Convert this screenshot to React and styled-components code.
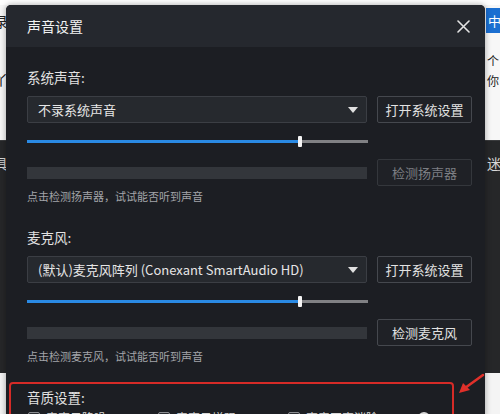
import React from "react"
import styled, { createGlobalStyle } from "styled-components"

const GlobalStyle = createGlobalStyle`
	html, body {
		margin: 0;
		padding: 0;
		width: 500px;
		height: 414px;
		overflow: hidden;
		font-family: "Noto Sans CJK SC", "Noto Sans", sans-serif;
	}
`

const sources = [
	{
		id: "sys",
		label: "系统声音:",
		device: "不录系统声音",
		test: "检测扬声器",
		disabled: true,
		hint: "点击检测扬声器，试试能否听到声音",
	},
	{
		id: "mic",
		label: "麦克风:",
		device: "(默认)麦克风阵列 (Conexant SmartAudio HD)",
		test: "检测麦克风",
		disabled: false,
		hint: "点击检测麦克风，试试能否听到声音",
	},
]

const qualityOptions = ["麦克风降噪", "麦克风增强", "声音回声消除"]

function App() {
	return (
		<>
			<GlobalStyle />
			<Page>
				<BackApp>
					<TopBand>
						<EdgeText side="left" top={8}>录</EdgeText>
						<EdgeText side="left" top={66}>丫</EdgeText>
						<BlueTab>中</BlueTab>
						<EdgeText side="right" top={48} small>个</EdgeText>
						<EdgeText side="right" top={68} small>你</EdgeText>
					</TopBand>
					<DarkBand>
						<EdgeText side="left" top={14} light>具</EdgeText>
						<EdgeText side="right" top={14} light>迷</EdgeText>
					</DarkBand>
					<BottomBand />
				</BackApp>

				<Dialog>
					<Header>
						<Title>声音设置</Title>
						<CloseButton aria-label="关闭">
							<svg width="13" height="13" viewBox="0 0 13 13">
								<path d="M1 1 L12 12 M12 1 L1 12" stroke="#e4e4e4" strokeWidth="1.6" strokeLinecap="round" />
							</svg>
						</CloseButton>
					</Header>
					<Body>
						{sources.map((s) => (
							<Section key={s.id}>
								<Label>{s.label}</Label>
								<Row>
									<Select>
										<span>{s.device}</span>
										<Caret />
									</Select>
									<Button>打开系统设置</Button>
								</Row>
								<SliderWrap>
									<Track>
										<Fill style={{ width: "80%" }} />
										<Thumb style={{ left: "80%" }} />
									</Track>
								</SliderWrap>
								<Row>
									<Meter />
									<Button disabled={s.disabled}>{s.test}</Button>
								</Row>
								<Hint>{s.hint}</Hint>
							</Section>
						))}
						<QualityBox>
							<Label>音质设置:</Label>
							<Options>
								{qualityOptions.map((o) => (
									<Option key={o}>
										<Check />
										<span>{o}</span>
									</Option>
								))}
								<Info>?</Info>
							</Options>
						</QualityBox>
					</Body>
					<Arrow width="28" height="22" viewBox="0 0 28 22">
						<path d="M26 2 L8 15" stroke="#e0302a" strokeWidth="2.6" strokeLinecap="round" />
						<path d="M2 20 L6 10 L13 17 Z" fill="#e0302a" />
					</Arrow>
				</Dialog>
			</Page>
		</>
	)
}

const Page = styled.div`
	position: relative;
	width: 500px;
	height: 414px;
	overflow: hidden;
	background: #ffffff;
`

const BackApp = styled.div`
	display: flex;
	flex-direction: column;
	height: 100%;
`

const TopBand = styled.div`
	position: relative;
	height: 140px;
	background: #f7f7f7;
	border-top: 5px solid #ffffff;
	box-sizing: border-box;
`

const DarkBand = styled.div`
	position: relative;
	height: 232px;
	background: #262729;
	border-top: 1px solid #3a3b3d;
`

const BottomBand = styled.div`
	flex: 1;
	background: #f4f4f4;
`

const EdgeText = styled.span`
	position: absolute;
	top: ${(p) => p.top}px;
	${(p) => (p.side === "left" ? "left: -6px;" : "left: 487px;")}
	font-size: ${(p) => (p.small ? 12 : 14)}px;
	line-height: 16px;
	color: ${(p) => (p.light ? "#d8d8d8" : "#222")};
`

const BlueTab = styled.div`
	position: absolute;
	top: 3px;
	left: 486px;
	width: 30px;
	height: 25px;
	background: #1b6fd1;
	color: #fff;
	font-size: 13px;
	line-height: 25px;
	padding-left: 2px;
`

const Dialog = styled.div`
	position: absolute;
	left: 6px;
	top: 5px;
	width: 479px;
	height: 440px;
	border-radius: 5px;
	overflow: hidden;
	background: #1c1e23;
	box-shadow: 0 0 6px rgba(0, 0, 0, 0.35);
`

const Header = styled.div`
	height: 42px;
	background: #25282e;
	display: flex;
	align-items: center;
	justify-content: space-between;
	padding: 0 14px 0 21px;
`

const Title = styled.h1`
	margin: 0;
	font-size: 14px;
	font-weight: 400;
	color: #f2f2f2;
`

const CloseButton = styled.button`
	background: none;
	border: none;
	padding: 0;
	width: 16px;
	height: 16px;
	display: flex;
	align-items: center;
	justify-content: center;
`

const Body = styled.div`
	padding: 20px 13px 0 21px;
	display: flex;
	flex-direction: column;
`

const Section = styled.div`
	display: flex;
	flex-direction: column;
	margin-bottom: 23px;
`

const Label = styled.div`
	height: 20px;
	line-height: 20px;
	font-size: 13.5px;
	color: #e2e2e2;
	margin-bottom: 9px;
`

const Row = styled.div`
	display: flex;
	align-items: center;
	gap: 10px;
	height: 27px;
`

const Select = styled.div`
	width: 341px;
	height: 27px;
	box-sizing: border-box;
	background: #26292e;
	border: 1px solid #3b3e44;
	border-radius: 2px;
	display: flex;
	align-items: center;
	justify-content: space-between;
	padding: 0 8px 0 10px;
	font-size: 13px;
	color: #e6e6e6;
	white-space: nowrap;
`

const Caret = styled.span`
	width: 0;
	height: 0;
	border-left: 5px solid transparent;
	border-right: 5px solid transparent;
	border-top: 6px solid #e0e0e0;
`

const Button = styled.button`
	width: 95px;
	height: 27px;
	box-sizing: border-box;
	background: #1f2126;
	border: 1px solid ${(p) => (p.disabled ? "#34373c" : "#45484e")};
	border-radius: 2px;
	font-family: inherit;
	font-size: 13px;
	color: ${(p) => (p.disabled ? "#7c7e83" : "#e2e2e2")};
	padding: 0;
`

const SliderWrap = styled.div`
	width: 341px;
	height: 36px;
	display: flex;
	align-items: center;
`

const Track = styled.div`
	position: relative;
	width: 100%;
	height: 3px;
	background: #808184;
`

const Fill = styled.div`
	height: 100%;
	background: #2a8ae4;
`

const Thumb = styled.div`
	position: absolute;
	top: -4px;
	width: 4px;
	height: 11px;
	margin-left: -2px;
	background: #f4f4f4;
	border-radius: 1px;
`

const Meter = styled.div`
	width: 341px;
	height: 12px;
	background: #33363b;
`

const Hint = styled.div`
	margin-top: 2px;
	height: 16px;
	line-height: 16px;
	font-size: 11px;
	color: #a3a5a9;
`

const QualityBox = styled.div`
	margin: -5px 18px 0 -18px;
	border: 2px solid #d52b27;
	border-radius: 4px;
	padding: 3px 16px 0 16px;
	height: 60px;
`

const Options = styled.div`
	display: flex;
	align-items: center;
	margin-top: -7px;
	padding-left: 1px;
`

const Option = styled.div`
	width: 130px;
	display: flex;
	align-items: center;
	gap: 6px;
	font-size: 12px;
	color: #d8d8d8;
	white-space: nowrap;
`

const Check = styled.span`
	width: 10px;
	height: 10px;
	border: 1px solid #8a8c90;
	border-radius: 2px;
	background: #2a2c31;
`

const Info = styled.span`
	width: 12px;
	height: 12px;
	border-radius: 50%;
	background: #d8d8d8;
	color: #1c1e23;
	font-size: 9px;
	text-align: center;
	line-height: 12px;
`

const Arrow = styled.svg`
	position: absolute;
	left: 451px;
	top: 368px;
`

export default App
